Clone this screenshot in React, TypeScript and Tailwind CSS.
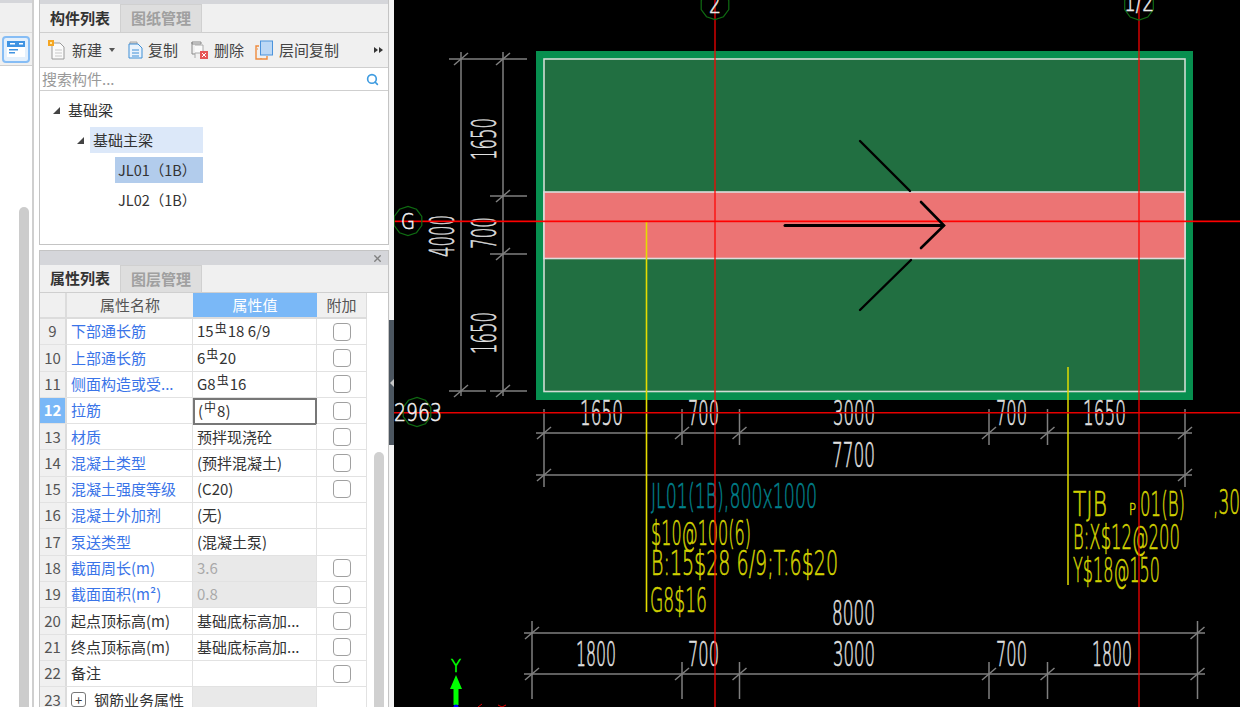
import React from "react";
import { Search, X } from "lucide-react";

const CJK = "font-['Noto_Sans_CJK_SC','Noto_Sans',sans-serif]";

type Row = { n: number; name: string; value: React.ReactNode; blue?: boolean; check?: boolean; gray?: boolean; active?: boolean; plus?: boolean };

const Sym = ({ c }: { c: string }) => (
  <span className="relative top-[-4px] mx-[1px] text-[12px] font-normal leading-none">{c}</span>
);

const rows: Row[] = [
  { n: 9, name: "下部通长筋", value: <>15<Sym c="虫" />18 6/9</>, blue: true, check: true },
  { n: 10, name: "上部通长筋", value: <>6<Sym c="虫" />20</>, blue: true, check: true },
  { n: 11, name: "侧面构造或受...", value: <>G8<Sym c="虫" />16</>, blue: true, check: true },
  { n: 12, name: "拉筋", value: <>(<Sym c="中" />8)</>, blue: true, check: true, active: true },
  { n: 13, name: "材质", value: "预拌现浇砼", blue: true, check: true },
  { n: 14, name: "混凝土类型", value: "(预拌混凝土)", blue: true, check: true },
  { n: 15, name: "混凝土强度等级", value: "(C20)", blue: true, check: true },
  { n: 16, name: "混凝土外加剂", value: "(无)", blue: true },
  { n: 17, name: "泵送类型", value: "(混凝土泵)", blue: true },
  { n: 18, name: "截面周长(m)", value: "3.6", blue: true, check: true, gray: true },
  { n: 19, name: "截面面积(m²)", value: "0.8", blue: true, check: true, gray: true },
  { n: 20, name: "起点顶标高(m)", value: "基础底标高加...", check: true },
  { n: 21, name: "终点顶标高(m)", value: "基础底标高加...", check: true },
  { n: 22, name: "备注", value: "", check: true },
  { n: 23, name: "钢筋业务属性", value: "", gray: true, plus: true },
];

function Tabs({ a, b, tall }: { a: string; b: string; tall?: boolean }) {
  return (
    <div className={`flex shrink-0 border-b border-[#cfcfcf] bg-[#f0f0f0] text-[15px] font-bold ${tall ? "h-[29px]" : "h-[28px]"}`}>
      <div className="flex w-[80px] items-center justify-center text-[#333]">{a}</div>
      <div className="flex w-[82px] items-center justify-center border-x border-t border-[#d0d0d0] bg-[#dedede] text-[#a0a0a0]">{b}</div>
    </div>
  );
}

function NewIcon() {
  return (
    <svg width="18" height="20" viewBox="0 0 18 20" fill="none">
      <path d="M4 3h8l4 4v12H4z" fill="#fafafa" stroke="#9a9a9a" />
      <path d="M7 10h7M7 13h7M7 16h7" stroke="#c8c8c8" />
      <rect x="0" y="0" width="6" height="6" fill="#f5a623" />
      <rect x="2" y="2" width="2" height="2" fill="#ffe9a8" />
    </svg>
  );
}
function CopyIcon() {
  return (
    <svg width="15" height="18" viewBox="0 0 15 18" fill="none">
      <path d="M2 1h7v2H2z" fill="#dcdcdc" stroke="#a8a8a8" />
      <path d="M1 3h9l4 4v10H1z" fill="#eaf3fc" stroke="#3f8fd6" />
      <path d="M4 9h7M4 12h7M4 15h7" stroke="#3f8fd6" />
    </svg>
  );
}
function DeleteIcon() {
  return (
    <svg width="18" height="18" viewBox="0 0 18 18" fill="none">
      <path d="M1 1h9v2H1zM1 1v12h3" stroke="#8a8a8a" fill="#eee" />
      <path d="M4 4h8v8H4v5" stroke="#aaa" fill="#fafafa" />
      <rect x="9" y="10" width="8" height="8" fill="#e65757" />
      <path d="M11 12l4 4M15 12l-4 4" stroke="#fff" />
    </svg>
  );
}
function LayerIcon() {
  return (
    <svg width="18" height="20" viewBox="0 0 18 20" fill="none">
      <path d="M4 6H1v13h11v-3" stroke="#ee8a3c" strokeWidth="1.4" />
      <path d="M2 9h1M6 19v-1" stroke="#ee8a3c" />
      <rect x="5.5" y="1" width="12" height="14" fill="#bcd8f5" stroke="#4b93dc" />
    </svg>
  );
}

function Panel1() {
  return (
    <div className="flex h-[245px] shrink-0 flex-col border border-t-0 border-[#c4c4c4] bg-white">
      <div className="h-[4px] shrink-0 bg-[#d5d6da]" />
      <Tabs a="构件列表" b="图纸管理" tall />
      <div className="flex h-[35px] shrink-0 items-center border-b border-[#cfcfcf] bg-[#f0f0f0] pl-[8px] pr-[4px] text-[15px] text-[#444]">
        <NewIcon />
        <span className="ml-[6px]">新建</span>
        <span className="ml-[7px] h-0 w-0 border-x-[3px] border-t-[4px] border-x-transparent border-t-[#555]" />
        <span className="ml-[13px] flex"><CopyIcon /></span>
        <span className="ml-[5px]">复制</span>
        <span className="ml-[13px] flex"><DeleteIcon /></span>
        <span className="ml-[5px]">删除</span>
        <span className="ml-[11px] flex"><LayerIcon /></span>
        <span className="ml-[6px]">层间复制</span>
        <span className="ml-auto flex pr-[1px]">
          <span className="h-0 w-0 border-y-[3.5px] border-l-[4px] border-y-transparent border-l-[#333]" />
          <span className="ml-[1px] h-0 w-0 border-y-[3.5px] border-l-[4px] border-y-transparent border-l-[#333]" />
        </span>
      </div>
      <div className="flex h-[23px] shrink-0 items-center justify-between border-b border-[#cfcfcf] pl-[2px] pr-[9px] text-[15px] text-[#999]">
        <span>搜索构件...</span>
        <Search size={13} strokeWidth={3} className="text-[#3e9be0]" />
      </div>
      <div className="flex flex-1 flex-col gap-[4px] pt-[6px] text-[15px] text-[#333]">
        <div className="flex h-[26px] items-center pl-[13px]">
          <span className="h-0 w-0 border-b-[7px] border-l-[7px] border-b-[#444] border-l-transparent" />
          <span className="ml-[8px]">基础梁</span>
        </div>
        <div className="flex h-[26px] items-center pl-[37px]">
          <span className="h-0 w-0 border-b-[7px] border-l-[7px] border-b-[#444] border-l-transparent" />
          <span className="ml-[6px] flex h-[26px] w-[113px] items-center bg-[#dce8f9] pl-[3px]">基础主梁</span>
        </div>
        <div className="ml-[75px] flex h-[26px] w-[88px] items-center bg-[#b2ccec] pl-[3px] text-[14.5px]">JL01（1B）</div>
        <div className="ml-[75px] flex h-[26px] w-[88px] items-center pl-[3px] text-[14.5px]">JL02（1B）</div>
      </div>
    </div>
  );
}

function Check() {
  return <span className="block h-[18px] w-[18px] rounded-[4px] border-[1.5px] border-[#a0a0a0] bg-white" />;
}

function Panel2() {
  return (
    <div className="flex min-h-0 flex-1 flex-col overflow-hidden border-x border-t border-[#c4c4c4] bg-white">
      <div className="flex h-[14px] shrink-0 items-center justify-end bg-[#d5d6da] pr-[5px]">
        <X size={11} strokeWidth={3} className="text-[#808080]" />
      </div>
      <Tabs a="属性列表" b="图层管理" />
      <div className="flex min-h-0 flex-1">
        <div className="w-[327px] shrink-0 text-[15px]">
          <div className="flex h-[26px] border-b-2 border-[#dcdcdc] bg-[#f0f0f0] text-[#555]">
            <div className="w-[27px] border-r-2 border-[#dcdcdc]" />
            <div className="flex w-[126px] items-center justify-center">属性名称</div>
            <div className="flex w-[124px] items-center justify-center bg-[#7ab8f7] text-white">属性值</div>
            <div className="flex w-[50px] items-center justify-center border-r border-[#dcdcdc]">附加</div>
          </div>
          {rows.map((r) => (
            <div key={r.n} className="flex h-[26.3px] border-b border-[#e2e2e2]">
              <div className={`flex w-[27px] items-center justify-center border-r-2 border-[#dcdcdc] ${r.active ? "bg-[#7ab8f7] font-bold text-white" : "bg-[#f0f0f0] text-[#555]"}`}>
                {r.n}
              </div>
              <div className={`flex w-[126px] items-center border-r border-[#e2e2e2] pl-[4px] ${r.blue ? "text-[#3a74e8]" : "text-[#333]"}`}>
                {r.plus && (
                  <span className="mr-[8px] flex h-[15px] w-[15px] items-center justify-center rounded-[3px] border border-[#777] text-[13px] leading-none">+</span>
                )}
                <span className="whitespace-nowrap">{r.name}</span>
              </div>
              <div className={r.active
                ? "flex h-[27px] w-[124px] items-center whitespace-nowrap border-2 border-[#777777] pl-[3px] text-[#333]"
                : `flex w-[124px] items-center whitespace-nowrap border-r border-[#e2e2e2] pl-[4px] ${r.gray ? "bg-[#e9e9e9] text-[#aaa]" : "text-[#333]"}`}>
                {r.value}
              </div>
              <div className="flex w-[50px] items-center justify-center border-r border-[#e2e2e2]">{r.check && <Check />}</div>
            </div>
          ))}
        </div>
        <div className="flex flex-1 flex-col pl-[7px] pt-[159px]">
          <div className="w-[10px] flex-1 rounded-t-full bg-[#d0d0d0]" />
        </div>
      </div>
    </div>
  );
}

function LeftStrip() {
  return (
    <div className="flex w-[34px] shrink-0 flex-col border-r-2 border-[#cfcfcf] bg-white">
      <div className="h-[3px] bg-[#d5d6da]" />
      <div className="h-[30px] border-b border-[#dcdcdc] bg-[#f0f0f0]" />
      <div className="flex h-[33px] items-center border-b border-[#cfcfcf] bg-[#f0f0f0] pl-[2px]">
        <div className="flex h-[27px] w-[28px] items-center justify-center rounded-[4px] border-2 border-[#86bdf5] bg-[#e4f0fc]">
          <svg width="18" height="16" viewBox="0 0 18 16">
            <rect width="18" height="16" fill="#fff" />
            <rect width="18" height="6" fill="#3f93e2" />
            <rect x="3" y="2" width="5" height="1.5" fill="#fff" />
            <rect x="12" y="2" width="4" height="1.5" fill="#fff" />
            <rect x="2" y="8" width="9" height="1.5" fill="#3f93e2" />
            <rect x="2" y="11" width="6" height="1.5" fill="#3f93e2" />
          </svg>
        </div>
      </div>
      <div className="flex flex-1 flex-col pl-[19px] pt-[141px]">
        <div className="w-[10px] flex-1 rounded-t-full bg-[#cccccc]" />
      </div>
    </div>
  );
}

/* ---- CAD drawing ---- */
const CAD = "'DejaVu Sans',sans-serif";

function T({ x, x2, base, cap, c = "#e0e0e0", s, rot }: { x: number; x2: number; base: number; cap: number; c?: string; s: string; rot?: boolean }) {
  const size = cap / 0.73;
  const len = x2 - x;
  if (rot) {
    // x..x2 is the vertical span (top..bottom), base is the x of the baseline
    return (
      <text transform={`translate(${base} ${x2}) rotate(-90)`} fontFamily={CAD} fontWeight={200} fontSize={size} fill={c} stroke={c} strokeWidth="0.6" textLength={len} lengthAdjust="spacingAndGlyphs">
        {s}
      </text>
    );
  }
  return (
    <text x={x} y={base} fontFamily={CAD} fontWeight={200} fontSize={size} fill={c} stroke={c} strokeWidth="0.6" textLength={len} lengthAdjust="spacingAndGlyphs">
      {s}
    </text>
  );
}

const G = "#7f7f7f";
const VTick = ({ x, y1, y2, sl }: { x: number; y1: number; y2: number; sl: number[] }) => (
  <g stroke={G} strokeWidth="1.5">
    <line x1={x} y1={y1} x2={x} y2={y2} />
    {sl.map((y) => (
      <line key={y} x1={x - 7} y1={y + 6} x2={x + 7} y2={y - 6} />
    ))}
  </g>
);
const HTick = ({ y, x1, x2, sl }: { y: number; x1: number; x2: number; sl: number[] }) => (
  <g stroke={G} strokeWidth="1.5">
    <line x1={x1} y1={y} x2={x2} y2={y} />
    {sl.map((x) => (
      <line key={x} x1={x - 6} y1={y - 7} x2={x + 6} y2={y + 7} />
    ))}
  </g>
);

function Bubble({ cx, cy, r }: { cx: number; cy: number; r: number }) {
  const pts = Array.from({ length: 10 }, (_, i) => {
    const a = (i * Math.PI) / 5 + Math.PI / 10;
    return `${(cx + r * Math.cos(a)).toFixed(1)},${(cy + r * Math.sin(a)).toFixed(1)}`;
  }).join(" ");
  return <polygon points={pts} fill="none" stroke="#0f6b12" strokeWidth="1.2" />;
}

function Drawing() {
  const Y = "#d2d200";
  return (
    <svg viewBox="394 0 846 707" width="846" height="707" className="block">
      <rect x="394" y="0" width="846" height="707" fill="#000" />
      {/* slab */}
      <rect x="536" y="51" width="657" height="349" fill="#078f4f" />
      <rect x="544" y="59" width="641" height="332.5" fill="#216f41" stroke="#d0dcd4" strokeWidth="1.6" />
      <rect x="544" y="192" width="641" height="66.5" fill="#ec7474" stroke="#dcdcdc" strokeWidth="1.6" />

      {/* vertical dimensions */}
      <VTick x={461} y1={52} y2={396} sl={[59, 391]} />
      <VTick x={503} y1={52} y2={396} sl={[59, 196, 254, 391]} />
      <HTick y={59} x1={449} x2={527} sl={[]} />
      <HTick y={196} x1={490} x2={527} sl={[]} />
      <HTick y={254} x1={490} x2={527} sl={[]} />
      <HTick y={391} x1={449} x2={486} sl={[]} />
      <HTick y={391} x1={490} x2={527} sl={[]} />
      <T rot s="1650" x={118} x2={160} base={496} cap={25} />
      <T rot s="700" x={217} x2={249} base={496} cap={25} />
      <T rot s="4000" x={215} x2={257} base={454} cap={25} />
      <T rot s="1650" x={312} x2={354} base={496} cap={25} />

      {/* horizontal dimensions */}
      <HTick y={433} x1={536} x2={1192} sl={[]} />
      <HTick y={475} x1={536} x2={1192} sl={[]} />
      <VTick x={544} y1={409} y2={487} sl={[433, 475]} />
      <VTick x={682} y1={409} y2={445} sl={[433]} />
      <VTick x={739.5} y1={409} y2={445} sl={[433]} />
      <VTick x={989} y1={409} y2={445} sl={[433]} />
      <VTick x={1047.5} y1={409} y2={445} sl={[433]} />
      <VTick x={1185} y1={409} y2={487} sl={[433, 475]} />
      <HTick y={633} x1={524} x2={1205} sl={[]} />
      <HTick y={674} x1={524} x2={1205} sl={[]} />
      <VTick x={532} y1={621} y2={699} sl={[633, 674]} />
      <VTick x={682} y1={662} y2={699} sl={[674]} />
      <VTick x={739.5} y1={662} y2={699} sl={[674]} />
      <VTick x={989} y1={662} y2={699} sl={[674]} />
      <VTick x={1047.5} y1={662} y2={699} sl={[674]} />
      <VTick x={1197.5} y1={621} y2={699} sl={[633, 674]} />

      <T s="1650" x={580} x2={623} base={425} cap={25} />
      <T s="700" x={688} x2={719} base={425} cap={25} />
      <T s="3000" x={833} x2={875} base={425} cap={25} />
      <T s="700" x={996} x2={1027} base={425} cap={25} />
      <T s="1650" x={1083} x2={1126} base={425} cap={25} />
      <T s="7700" x={832} x2={875} base={467} cap={25} />
      <T s="8000" x={832} x2={875} base={625} cap={25} />
      <T s="1800" x={576} x2={616} base={666} cap={25} />
      <T s="700" x={688} x2={719} base={666} cap={25} />
      <T s="3000" x={833} x2={875} base={666} cap={25} />
      <T s="700" x={996} x2={1027} base={666} cap={25} />
      <T s="1800" x={1092} x2={1132} base={666} cap={25} />

      {/* annotations */}
      <line x1="646.5" y1="221" x2="646.5" y2="612" stroke="#e4dc00" strokeWidth="1.6" />
      <line x1="1068" y1="367" x2="1068" y2="585" stroke="#e0dc00" strokeWidth="1.5" />
      <T s="JL01(1B),800x1000" x={651} x2={817} base={508} cap={24} c="#00808c" />
      <T s="$10@100(6)" x={651} x2={751} base={545} cap={24} c={Y} />
      <T s="B:15$28 6/9;T:6$20" x={651} x2={838} base={575} cap={24} c={Y} />
      <T s="G8$16" x={650} x2={707} base={612} cap={24} c={Y} />
      <T s="TJB" x={1073} x2={1107} base={516} cap={24} c={Y} />
      <T s="P" x={1129} x2={1136} base={515} cap={12} c={Y} />
      <T s="01(B)" x={1140} x2={1185} base={516} cap={24} c={Y} />
      <T s=",30" x={1213} x2={1240} base={514} cap={24} c={Y} />
      <T s="B:X$12@200" x={1073} x2={1180} base={549} cap={24} c={Y} />
      <T s="Y$18@150" x={1073} x2={1160} base={582} cap={24} c={Y} />

      {/* axes */}
      <line x1="715" y1="0" x2="715" y2="707" stroke="#ff0000" strokeOpacity="0.62" strokeWidth="2" />
      <line x1="1139" y1="0" x2="1139" y2="707" stroke="#ff0000" strokeOpacity="0.62" strokeWidth="2" />
      <rect x="394" y="220.5" width="846" height="1.7" fill="#ff0000" />
      <rect x="394" y="412" width="846" height="1.5" fill="#e60000" />

      {/* arrow */}
      <g stroke="#000" fill="none" strokeLinecap="round">
        <line x1="785" y1="225.5" x2="943" y2="225.5" strokeWidth="3" />
        <path d="M921 202 L944 225.5 L921 248" strokeWidth="2.6" />
        <line x1="860" y1="141" x2="910" y2="191" strokeWidth="2.4" />
        <line x1="860" y1="310" x2="911" y2="260" strokeWidth="2.4" />
      </g>

      {/* bubbles */}
      <Bubble cx={715} cy={5} r={14.5} />
      <Bubble cx={1139} cy={5} r={15} />
      <Bubble cx={408} cy={221} r={14.5} />
      <Bubble cx={417} cy={412} r={14.5} />
      <T s="2" x={709} x2={721} base={13} cap={20} c="#e8e8e8" />
      <T s="1/2" x={1124} x2={1154} base={11} cap={20} c="#e8e8e8" />
      <T s="G" x={401} x2={415} base={229} cap={16} c="#f0f0f0" />
      <T s="2963" x={394} x2={442} base={421} cap={18} c="#f0f0f0" />

      {/* UCS */}
      <T s="Y" x={451} x2={461} base={672} cap={13} c="#00ff00" />
      <path d="M456 675 L462 689 H458.5 V705 H453.5 V689 H450 Z" fill="#00ff00" />
      <circle cx="456" cy="707" r="2.5" fill="#0000ff" />
      <path d="M478 707 L482 704 M498 705 L502 707 M506 705 L502 707" stroke="#e00000" strokeWidth="1" fill="none" />
    </svg>
  );
}

export default function App() {
  return (
    <div className={`flex h-[707px] w-[1240px] overflow-hidden bg-white ${CJK}`}>
      <LeftStrip />
      <div className="w-[5px] shrink-0 bg-white" />
      <div className="flex w-[350px] shrink-0 flex-col">
        <Panel1 />
        <div className="h-[5px] shrink-0 bg-white" />
        <Panel2 />
      </div>
      <div className="flex w-[5px] shrink-0 flex-col bg-[#f4f4f4]">
        <div className="h-[320px]" />
        <div className="flex h-[125px] items-center justify-center bg-[#4c5660]">
          <span className="h-0 w-0 border-y-[4px] border-r-[4px] border-y-transparent border-r-[#c8c8c8]" />
        </div>
      </div>
      <div className="flex-1">
        <Drawing />
      </div>
    </div>
  );
}
